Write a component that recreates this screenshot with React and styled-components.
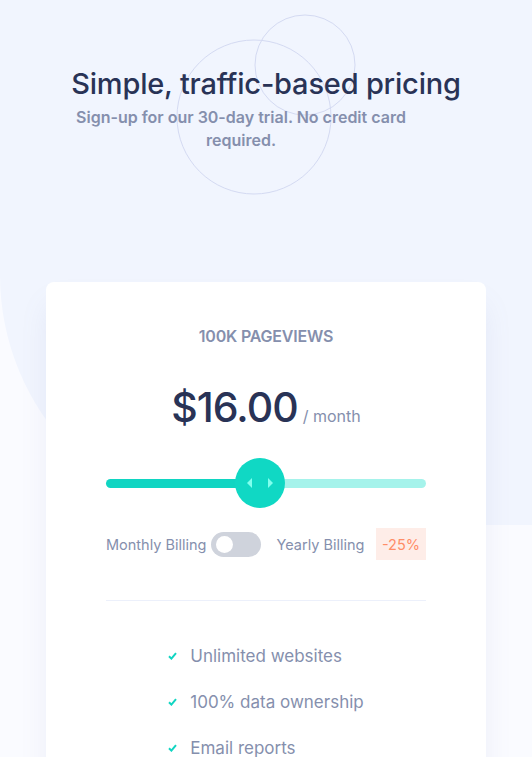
import styled, { createGlobalStyle } from "styled-components";

const GlobalStyle = createGlobalStyle`
  * { box-sizing: border-box; }
  body {
    margin: 0;
    background-color: #fafbff;
    font-family: "Inter", "Noto Sans", sans-serif;
  }
`;

const Page = styled.main`
  position: relative;
  min-height: 757px;
  overflow: hidden;
  padding-bottom: 40px;

  &::before {
    content: "";
    position: absolute;
    left: 0;
    top: 0;
    width: 100%;
    height: 525px;
    background-color: #f1f5fe;
    border-bottom-left-radius: 250px;
  }
`;

const Circles = styled.svg`
  position: absolute;
  top: 14px;
  left: calc(50% - 95px);
`;

const Header = styled.header`
  position: relative;
  padding-top: 66px;
  text-align: center;
`;

const Title = styled.h1`
  margin: 0;
  font-size: 29px;
  font-weight: 500;
  line-height: 36px;
  letter-spacing: -0.2px;
  color: #293356;
`;

const Subtitle = styled.p`
  width: 350px;
  margin: 4px 0 0 66px;
  font-size: 16px;
  font-weight: 600;
  line-height: 23px;
  color: #858fad;
`;

const Card = styled.section`
  position: relative;
  width: 440px;
  margin: 130px auto 0;
  padding: 42px 60px 20px;
  background-color: #ffffff;
  border-radius: 8px;
  box-shadow: 0 20px 30px -5px rgba(127, 137, 185, 0.15);
`;

const Views = styled.h2`
  margin: 0;
  text-align: center;
  font-size: 16px;
  font-weight: 600;
  letter-spacing: -0.2px;
  line-height: 24px;
  color: #858fad;
`;

const PriceRow = styled.div`
  display: flex;
  justify-content: center;
  align-items: baseline;
  gap: 5px;
  margin-top: 34px;
`;

const Price = styled.span`
  font-size: 41px;
  font-weight: 500;
  letter-spacing: -1px;
  color: #293356;
`;

const Period = styled.span`
  font-size: 16px;
  color: #858fad;
`;

const Slider = styled.div`
  position: relative;
  display: flex;
  align-items: center;
  height: 50px;
  margin-top: 26px;
`;

const Track = styled.div`
  flex: 1;
  height: 9px;
  border-radius: 5px;
  background: linear-gradient(
    to right,
    #10d5c2 ${(p) => p.$fill}%,
    #a5f3eb ${(p) => p.$fill}%
  );
`;

const Thumb = styled.div`
  position: absolute;
  top: 0;
  display: flex;
  justify-content: center;
  align-items: center;
  gap: 16px;
  width: 50px;
  height: 50px;
  margin-left: -25px;
  border-radius: 50%;
  background-color: #10d8c4;
`;

const Arrow = styled.span`
  width: 0;
  height: 0;
  border-top: 5px solid transparent;
  border-bottom: 5px solid transparent;
  ${(p) =>
    p.$dir === "left"
      ? "border-right: 5px solid #80ffee;"
      : "border-left: 5px solid #80ffee;"}
`;

const BillingRow = styled.div`
  display: flex;
  align-items: center;
  margin-top: 20px;
`;

const BillingLabel = styled.span`
  font-size: 14.5px;
  color: #858fad;
  margin-right: ${(p) => p.$gap || 0}px;
`;

const Toggle = styled.div`
  display: flex;
  align-items: center;
  width: 50px;
  height: 25px;
  padding: 0 5px;
  margin-right: 15px;
  border-radius: 13px;
  background-color: #cfd3dc;
`;

const Knob = styled.span`
  width: 17px;
  height: 17px;
  border-radius: 50%;
  background-color: #ffffff;
`;

const Badge = styled.span`
  display: flex;
  align-items: center;
  height: 32px;
  padding: 0 6px;
  margin-left: auto;
  font-size: 14.5px;
  color: #ff8d68;
  background-color: #feede8;
`;

const Divider = styled.hr`
  margin: 40px 0 0;
  border: none;
  border-top: 1px solid #ecf0fb;
`;

const Features = styled.ul`
  width: fit-content;
  margin: 32px auto 0;
  padding: 0;
  list-style: none;
`;

const Feature = styled.li`
  display: flex;
  align-items: center;
  gap: 13px;
  height: 46px;
  font-size: 17px;
  color: #858fad;
`;

const Check = () => (
  <svg width="9" height="8" viewBox="0 0 9 8">
    <path d="M1 4.2l2.4 2.4L8 1.2" fill="none" stroke="#10d5c2" strokeWidth="2" />
  </svg>
);

const features = ["Unlimited websites", "100% data ownership", "Email reports"];

const App = () => {
  const fill = 48;
  return (
    <>
      <GlobalStyle />
      <Page>
        <Circles width="190" height="190" viewBox="0 0 190 190">
          <circle cx="83" cy="103" r="77" fill="none" stroke="#d4daf2" strokeWidth="1" />
          <circle cx="134" cy="51" r="50" fill="none" stroke="#d4daf2" strokeWidth="1" />
        </Circles>
        <Header>
          <Title>Simple, traffic-based pricing</Title>
          <Subtitle>Sign-up for our 30-day trial. No credit card required.</Subtitle>
        </Header>
        <Card>
          <Views>100K PAGEVIEWS</Views>
          <PriceRow>
            <Price>$16.00</Price>
            <Period>/ month</Period>
          </PriceRow>
          <Slider>
            <Track $fill={fill} />
            <Thumb style={{ left: `${fill}%` }}>
              <Arrow $dir="left" />
              <Arrow $dir="right" />
            </Thumb>
          </Slider>
          <BillingRow>
            <BillingLabel $gap={5}>Monthly Billing</BillingLabel>
            <Toggle>
              <Knob />
            </Toggle>
            <BillingLabel>Yearly Billing</BillingLabel>
            <Badge>-25%</Badge>
          </BillingRow>
          <Divider />
          <Features>
            {features.map((f) => (
              <Feature key={f}>
                <Check />
                {f}
              </Feature>
            ))}
          </Features>
        </Card>
      </Page>
    </>
  );
};

export default App;
